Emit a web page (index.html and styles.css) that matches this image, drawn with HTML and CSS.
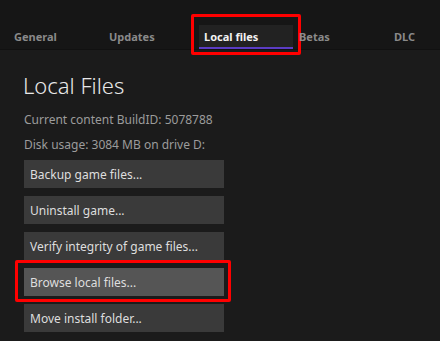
FILE: index.html
```html
<!DOCTYPE html>
<html lang="en">
<head>
    <meta charset="UTF-8">
    <title>Properties - Local files</title>
    <link rel="stylesheet" href="styles.css">
</head>
<body>
    <nav class="tabs">
        <div class="tab">General</div>
        <div class="tab">Updates</div>
        <div class="tab active marked">Local files</div>
        <div class="tab">Betas</div>
        <div class="tab last">DLC</div>
    </nav>

    <main class="panel">
        <h1>Local Files</h1>
        <p class="info">Current content BuildID: 5078788</p>
        <p class="info">Disk usage: 3084 MB on drive D:</p>

        <div class="actions">
            <button class="action">Backup game files...</button>
            <button class="action">Uninstall game...</button>
            <button class="action">Verify integrity of game files...</button>
            <button class="action hover marked">Browse local files...</button>
            <button class="action">Move install folder...</button>
        </div>
    </main>
</body>
</html>
```

FILE: styles.css
```css
:root {
    --bg-color: #1b1b1b;
    --tabbar-color: #161616;
    --accent-color: #5b3cc4;
    --mark-color: #ff0000;
    --button-color: #3a3a3a;
}

* {
    margin: 0;
    padding: 0;
    box-sizing: border-box;
    font-family: 'Noto Sans', 'Open Sans', sans-serif;
}

body {
    background-color: var(--bg-color);
    color: #dcdcdc;
    width: 440px;
    height: 341px;
    overflow: hidden;
}

.tabs {
    display: flex;
    align-items: flex-end;
    gap: 1px;
    height: 50px;
    padding-left: 9px;
    background-color: var(--tabbar-color);
    border-bottom: 1px solid #111111;
}

.tab {
    position: relative;
    flex-shrink: 0;
    width: 94px;
    height: 24px;
    padding: 2px 0 0 5px;
    font-size: 11px;
    font-weight: 700;
    line-height: 20px;
    color: #8a8a8a;
}

.tab.last {
    width: 46px;
}

.tab.active {
    background-color: #222222;
    color: #f2f2f2;
    border-bottom: 2px solid var(--accent-color);
}

/* red annotation boxes drawn over the screenshot */
.marked::after {
    content: "";
    position: absolute;
    border: 3px solid var(--mark-color);
    border-radius: 2px;
    pointer-events: none;
}

.tab.marked::after {
    left: -8px;
    right: -8px;
    top: -11px;
    bottom: -8px;
}

.panel {
    padding: 19px 0 0 24px;
}

h1 {
    font-size: 22px;
    font-weight: 300;
    color: #e8e8e8;
    margin-left: -1px;
    margin-bottom: 6px;
    line-height: 32px;
}

.info {
    font-size: 12px;
    color: #9c9c9c;
    line-height: 25px;
}

.actions {
    display: flex;
    flex-direction: column;
    gap: 8px;
    margin-top: 3px;
}

.action {
    position: relative;
    width: 200px;
    height: 28px;
    border: none;
    background-color: var(--button-color);
    color: #dedede;
    font-size: 12px;
    text-align: left;
    padding-left: 6px;
    cursor: pointer;
}

.action.hover {
    background-color: #555555;
}

.action.marked::after {
    left: -9px;
    right: -7px;
    top: -8px;
    bottom: -6px;
}
```
